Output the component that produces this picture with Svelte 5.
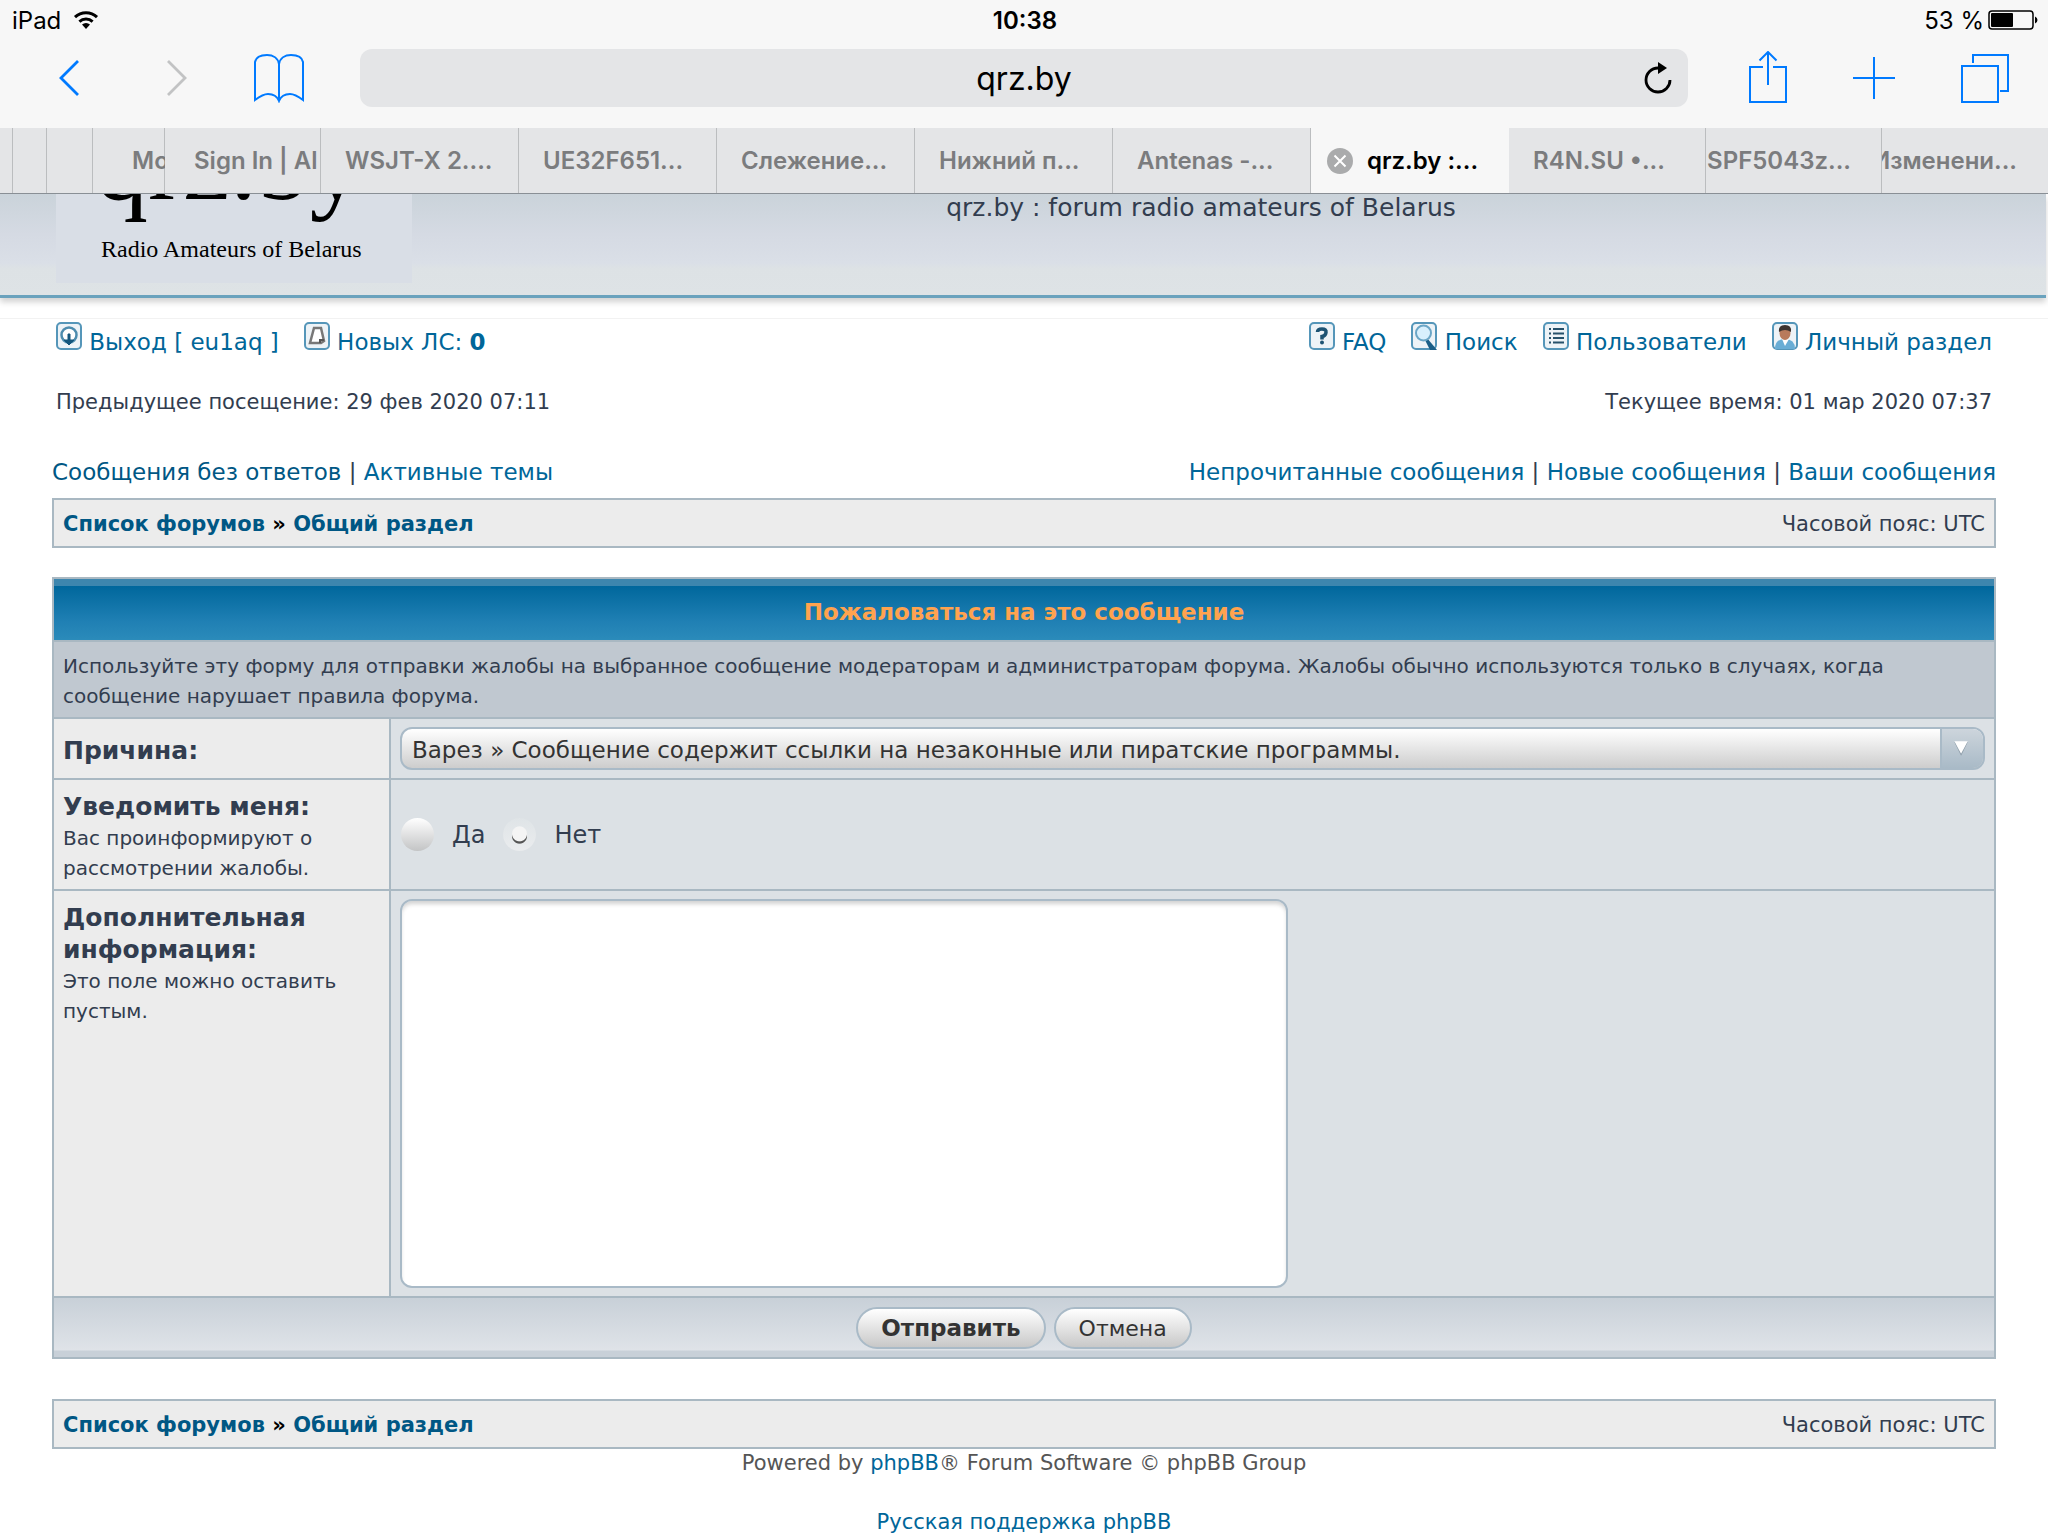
<script>
	let reason = $state('warez');
	let notify = $state('no');
	let details = $state('');

	const tabs = [
		{ title: '', width: 13 },
		{ title: '', width: 34 },
		{ title: '', width: 46 },
		{ title: 'Mo', width: 72, stack: 'deep' },
		{ title: 'Sign In | Al', width: 156, stack: 'left' },
		{ title: 'WSJT-X 2....', width: 198 },
		{ title: 'UE32F651...', width: 198 },
		{ title: 'Слежение...', width: 198 },
		{ title: 'Нижний п...', width: 198 },
		{ title: 'Antenas -...', width: 198 },
		{ title: 'qrz.by :...', width: 198, active: true },
		{ title: 'R4N.SU •...', width: 197 },
		{ title: 'SPF5043z...', width: 176, stack: 'right' },
		{ title: 'Изменени...', width: 166, stack: 'right' }
	];
</script>

{#snippet crumbs()}
	<nav class="crumbs">
		<p class="crumbs__path">
			<a href="#index">Список форумов</a> » <a href="#forum">Общий раздел</a>
		</p>
		<p class="crumbs__zone">Часовой пояс: UTC</p>
	</nav>
{/snippet}

<div class="browser">
	<div class="status">
		<div class="status__side">
			<span>iPad</span>
			<svg width="26" height="20" viewBox="0 0 26 20">
				<path d="M2 7.2a16 16 0 0 1 22 0M6.4 11.6a10 10 0 0 1 13.2 0" fill="none" stroke="#000" stroke-width="3" />
				<path d="M13 19l-4-4.400a6 6 0 0 1 8 0z" />
			</svg>
		</div>
		<span class="status__time">10:38</span>
		<div class="status__side status__side_right">
			<span>53 %</span>
			<svg width="50" height="20" viewBox="0 0 50 20">
				<rect x="1" y="1" width="44" height="18" rx="3" fill="none" stroke="#000" stroke-width="1.500" />
				<rect x="3" y="3" width="22" height="14" rx="1" />
				<path d="M47 6.500q2.500 1 2.500 3.500t-2.500 3.500z" />
			</svg>
		</div>
	</div>

	<div class="toolbar">
		<div class="toolbar__group">
			<div class="toolbar__nav">
				<button type="button" class="tool" aria-label="Back">
					<svg width="24" height="40" viewBox="0 0 24 40"><path d="M21 3L4 20l17 17" stroke-width="2.800" /></svg>
				</button>
				<button type="button" class="tool tool_off" aria-label="Forward" disabled>
					<svg width="24" height="40" viewBox="0 0 24 40"><path d="M3 3l17 17L3 37" stroke-width="2.800" /></svg>
				</button>
			</div>
			<button type="button" class="tool" aria-label="Bookmarks">
				<svg width="52" height="50" viewBox="0 0 52 50">
					<path
						d="M26 48V11C25 5 20 2 14 2S3 4 2 9v38c4-3 8-6 13-6 6 0 9 2 11 7 2-5 5-7 11-7 5 0 9 3 13 6V9C49 4 44 2 38 2S27 5 26 11"
					/>
				</svg>
			</button>
		</div>
		<div class="address">
			<input class="address__input" type="text" aria-label="Address" value="qrz.by" />
			<button type="button" class="address__reload" aria-label="Reload">
				<svg width="28" height="32" viewBox="0 0 28 32">
					<path d="M14 6A12 12 0 1 0 26 18" fill="none" stroke="#000" stroke-width="2.800" />
					<path d="M14 0v12l9-6z" />
				</svg>
			</button>
		</div>
		<div class="toolbar__group">
			<button type="button" class="tool" aria-label="Share">
				<svg width="40" height="54" viewBox="0 0 40 54">
					<path d="M15 16H2v35h36V16H25M20 34V1M11.500 9.500L20 1l8.500 8.500" />
				</svg>
			</button>
			<button type="button" class="tool" aria-label="New tab">
				<svg width="44" height="44" viewBox="0 0 44 44"><path d="M22 1v42M1 22h42" /></svg>
			</button>
			<button type="button" class="tool" aria-label="Tabs">
				<svg width="50" height="50" viewBox="0 0 50 50">
					<path d="M2 13h36v36H2zM13 10V2h35v36h-8" />
				</svg>
			</button>
		</div>
	</div>

	<div class="tabs">
		{#each tabs as tab}
			<button
				type="button"
				class="tab {tab.stack ? 'tab_' + tab.stack : ''}"
				class:tab_active={tab.active}
				style:flex-grow={tab.width}
				aria-label={tab.title || 'Tab'}
			>
				{#if tab.active}
					<svg class="tab__close" width="26" height="26" viewBox="0 0 26 26">
						<circle cx="13" cy="13" r="13" fill="#aaabac" />
						<path d="M7.500 7.500l11 11M18.500 7.500l-11 11" stroke="#fff" stroke-width="2" />
					</svg>
				{/if}
				<span>{tab.title}</span>
			</button>
		{/each}
	</div>
</div>

<div class="page">
	<header class="header">
		<a class="logo" href="#index">
			<span class="logo__name">qrz.by</span>
			<span class="logo__text">Radio Amateurs of Belarus</span>
		</a>
		<p class="header__title">qrz.by : forum radio amateurs of Belarus</p>
	</header>

	<div class="menu">
		<div class="menu__group">
			<a class="menu__link" href="#logout">
				<svg class="icon" viewBox="0 0 26 28">
					<rect class="icon__frame" x="1" y="1" width="24" height="26" rx="4" />
					<circle cx="13" cy="13" r="7.500" fill="#fff" stroke="#4d8cae" stroke-width="2.500" />
					<path d="M12 12h2v6h4l-5 5-5-5h4z" fill="#14567c" stroke="#14567c" />
				</svg>
				Выход [ eu1aq ]
			</a>
			<a class="menu__link" href="#messages">
				<svg class="icon" viewBox="0 0 26 28">
					<rect class="icon__frame" x="1" y="1" width="24" height="26" rx="4" />
					<path d="M10 6h7l3 13-3 2H6z" fill="#fff" stroke="#777" stroke-width="2.500" />
					<path d="M16 21v-3h4" fill="none" stroke="#555" stroke-width="2" />
				</svg>
				Новых ЛС: <strong>0</strong>
			</a>
		</div>
		<div class="menu__group">
			<a class="menu__link" href="#faq">
				<svg class="icon" viewBox="0 0 26 28">
					<rect class="icon__frame" x="1" y="1" width="24" height="26" rx="4" />
					<path d="M8.500 10q0-3 4.500-3t4 3.500-4 4v3" fill="none" stroke="#1d5373" stroke-width="3.500" />
					<circle cx="13" cy="20.500" r="2" fill="#1d5373" />
				</svg>
				FAQ
			</a>
			<a class="menu__link" href="#search">
				<svg class="icon" viewBox="0 0 26 28">
					<rect class="icon__frame" x="1" y="1" width="24" height="26" rx="4" />
					<path d="M16 16l10 12h-7l-5-10z" fill="#1b5f88" />
					<circle cx="12.500" cy="11" r="7.500" fill="#d8f0fd" stroke="#6ba6c6" stroke-width="2" />
				</svg>
				Поиск
			</a>
			<a class="menu__link" href="#members">
				<svg class="icon" viewBox="0 0 26 28">
					<rect class="icon__frame" x="1" y="1" width="24" height="26" rx="4" />
					<path
						d="M6 7h2M6 11.500h2M6 16h2M6 20.500h2M10 7h11M10 11.500h11M10 16h11M10 20.500h11"
						stroke="#26516b"
						stroke-width="2"
					/>
				</svg>
				Пользователи
			</a>
			<a class="menu__link" href="#profile">
				<svg class="icon" viewBox="0 0 26 28">
					<rect class="icon__frame" x="1" y="1" width="24" height="26" rx="4" />
					<path d="M3 27q0-10 10-10t10 10z" fill="#69add5" />
					<path d="M10 17l3 7 4-7z" fill="#fff" />
					<ellipse cx="13" cy="11" rx="5.500" ry="7" fill="#b87a5c" />
					<path d="M7 10q-1-7 6-7t6 7q-6-4-12 0z" fill="#3d332f" />
				</svg>
				Личный раздел
			</a>
		</div>
	</div>

	<div class="visits">
		<p>Предыдущее посещение: 29 фев 2020 07:11</p>
		<p>Текущее время: 01 мар 2020 07:37</p>
	</div>

	<main class="content">
		<div class="searches">
			<p><a class="visited" href="#unanswered">Сообщения без ответов</a> | <a href="#active">Активные темы</a></p>
			<p>
				<a href="#unread">Непрочитанные сообщения</a> | <a href="#new">Новые сообщения</a> |
				<a href="#own">Ваши сообщения</a>
			</p>
		</div>

		{@render crumbs()}

		<form class="report" onsubmit={(e) => e.preventDefault()}>
			<h1 class="report__title">Пожаловаться на это сообщение</h1>
			<p class="report__info">
				Используйте эту форму для отправки жалобы на выбранное сообщение модераторам и администраторам форума. Жалобы
				обычно используются только в случаях, когда сообщение нарушает правила форума.
			</p>

			<div class="row">
				<div class="row__name row__name_middle"><label class="row__label" for="reason">Причина:</label></div>
				<div class="row__value">
					<div class="select">
						<select class="select__field" id="reason" bind:value={reason}>
							<option value="warez">Варез » Сообщение содержит ссылки на незаконные или пиратские программы.</option>
						</select>
						<svg class="select__arrow" width="43" height="39" viewBox="0 0 43 39">
							<path d="M13 13h14l-7 14z" fill="#8c9ca8" />
							<path d="M13 12h14l-7 13z" fill="#fff" />
						</svg>
					</div>
				</div>
			</div>

			<div class="row">
				<div class="row__name">
					<span class="row__label" id="notify">Уведомить меня:</span>
					<span class="row__hint">Вас проинформируют о рассмотрении жалобы.</span>
				</div>
				<div class="row__value row__value_radios" role="radiogroup" aria-labelledby="notify">
					<label class="radio"><input class="radio__input" type="radio" value="yes" bind:group={notify} />Да</label>
					<label class="radio"><input class="radio__input" type="radio" value="no" bind:group={notify} />Нет</label>
				</div>
			</div>

			<div class="row">
				<div class="row__name">
					<label class="row__label" for="details">Дополнительная информация:</label>
					<span class="row__hint">Это поле можно оставить пустым.</span>
				</div>
				<div class="row__value">
					<textarea class="details" id="details" bind:value={details}></textarea>
				</div>
			</div>

			<div class="report__actions">
				<button type="submit" class="btn btn_main">Отправить</button>
				<button type="button" class="btn">Отмена</button>
			</div>
		</form>

		{@render crumbs()}
	</main>

	<footer class="footer">
		<p>Powered by <a href="#phpbb">phpBB</a>® Forum Software © phpBB Group</p>
		<p><a href="#support">Русская поддержка phpBB</a></p>
	</footer>
</div>

<style>
	:global(body) {
		background: #fff;
	}
	* {
		box-sizing: border-box;
	}
	p,
	h1 {
		margin: 0;
	}
	button,
	input,
	select,
	textarea {
		margin: 0;
		padding: 0;
		border: none;
		background: none;
		font-family: inherit;
	}
	svg {
		display: block;
		flex-shrink: 0;
	}

	.browser {
		background: #f7f7f7;
		border-bottom: 1px solid #8b9197;
		font-family: Inter, 'Liberation Sans', sans-serif;
		color: #000;
	}
	.status {
		display: grid;
		grid-template-columns: 1fr auto 1fr;
		align-items: center;
		height: 40px;
		padding: 0 10px 0 12px;
		font-size: 24px;
	}
	.status__side {
		display: flex;
		align-items: center;
		gap: 12px;
	}
	.status__side_right {
		justify-content: flex-end;
		gap: 4px;
	}
	.status__time {
		font-weight: 600;
	}

	.toolbar {
		display: flex;
		align-items: center;
		gap: 55px;
		height: 88px;
		padding: 0 38px 12px 57px;
	}
	.toolbar__group {
		display: flex;
		align-items: center;
		gap: 64px;
	}
	.toolbar__group:last-child {
		padding-left: 5px;
	}
	.toolbar__nav {
		display: flex;
		gap: 84px;
	}
	.tool svg {
		fill: none;
		stroke: #007aff;
		stroke-width: 2;
	}
	.tool_off svg {
		stroke: #c2c3c4;
	}
	.address {
		display: flex;
		align-items: center;
		flex-grow: 1;
		height: 58px;
		padding: 0 16px 0 44px;
		border-radius: 12px;
		background: #e4e5e7;
	}
	.address__input {
		flex-grow: 1;
		font-size: 32px;
		text-align: center;
	}

	.tabs {
		display: flex;
		height: 65px;
	}
	.tab {
		display: flex;
		align-items: center;
		flex-basis: 0;
		min-width: 0;
		overflow: hidden;
		box-shadow: inset -1px 0 #bbbdbf;
		background: #e4e5e7;
		font-size: 24px;
		font-weight: 600;
		color: #7b7c7e;
		white-space: nowrap;
	}
	.tab span {
		flex-shrink: 0;
		margin-left: 24px;
	}
	.tab:last-child {
		box-shadow: none;
	}
	.tab_deep span {
		margin-left: 39px;
	}
	.tab_left span {
		margin-left: 29px;
	}
	.tab_right {
		justify-content: flex-end;
	}
	.tab_right span {
		margin: 0 31px 0 0;
	}
	.tab_active {
		box-shadow: none;
		background: #f7f7f7;
		color: #000;
	}
	.tab_active span {
		margin-left: 14px;
	}
	.tab__close {
		margin-left: 16px;
	}

	.page {
		font-family: 'DejaVu Sans', sans-serif;
		color: #323d4f;
	}
	a {
		color: #006699;
		text-decoration: none;
	}
	a.visited {
		color: #005784;
	}
	.header {
		display: flex;
		height: 104px;
		margin-right: 2px;
		padding: 0 56px;
		border-bottom: 3px solid #6aa2bd;
		background: linear-gradient(#cad3da, #d5dae3 40%, #dadfe7 68%, #dde2e5 74%, #dee3e6);
		box-shadow: 0 4px 6px rgba(0, 0, 0, 0.18);
	}
	.logo {
		display: flex;
		flex-direction: column;
		justify-content: flex-end;
		flex-shrink: 0;
		width: 356px;
		height: 89px;
		padding: 0 0 19px 39px;
		overflow: hidden;
		background: #d9dee6;
		font-family: 'Liberation Serif', serif;
		color: #000;
		white-space: nowrap;
	}
	.logo__name {
		margin-bottom: 20px;
		font-size: 106px;
		line-height: 100px;
	}
	.logo__text {
		padding-left: 6px;
		font-size: 24px;
		line-height: 30px;
	}
	.header__title {
		flex-grow: 1;
		font-size: 25px;
		line-height: 27px;
		text-align: center;
	}

	.menu,
	.visits,
	.searches,
	.crumbs {
		display: flex;
		justify-content: space-between;
	}
	.menu {
		margin-top: 20px;
		padding: 3px 56px 0;
		border-top: 1px solid #f2f2f2;
		font-size: 23px;
		line-height: 34px;
	}
	.menu__group {
		display: flex;
		gap: 25px;
	}
	.menu__link {
		display: block;
	}
	.icon {
		display: inline-block;
		width: 26px;
		height: 28px;
	}
	.icon__frame {
		fill: #edf3f7;
		stroke: #5596b9;
		stroke-width: 2;
	}
	.visits {
		padding: 28px 56px 0;
		font-size: 21px;
		line-height: 30px;
	}
	.content {
		padding: 38px 52px 0;
	}
	.searches {
		margin-bottom: 9px;
		font-size: 23px;
		line-height: 34px;
	}
	.crumbs {
		align-items: center;
		height: 50px;
		padding: 2px 9px 0;
		border: 2px solid #a9b8c2;
		background: #ececec;
		font-size: 21px;
	}
	.crumbs__path {
		font-weight: 700;
		color: #000;
	}
	.crumbs__path a {
		color: #005784;
	}

	.report {
		display: flex;
		flex-direction: column;
		gap: 2px;
		margin: 29px 0 40px;
		border: 2px solid #a9b8c2;
		background: #a9b8c2;
	}
	.report__title {
		height: 61px;
		padding-top: 6px;
		background: linear-gradient(#3d86ae 0 7px, #00679c 7px, #2080b4 70%, #2b8bba);
		font-size: 23px;
		line-height: 54px;
		color: #ffa34f;
		text-align: center;
	}
	.report__info {
		padding: 9px 9px 6px;
		background: #c0c8d0;
		font-size: 20px;
		line-height: 30px;
	}
	.row {
		display: grid;
		grid-template-columns: 335px 1fr;
		gap: 2px;
	}
	.row__name {
		padding: 11px 9px 6px;
		background: #ececec;
	}
	.row__label {
		display: block;
		font-size: 25px;
		font-weight: 700;
		line-height: 32px;
	}
	.row__hint {
		display: block;
		font-size: 20px;
		line-height: 30px;
	}
	.row__value {
		padding: 8px 9px;
		background: #dce1e5;
	}
	.row__name_middle {
		display: flex;
		align-items: center;
	}
	.row__value_radios {
		display: flex;
		align-items: center;
		gap: 18px;
		padding-left: 10px;
	}
	.select {
		display: grid;
		height: 43px;
		border: 2px solid #a9bac7;
		border-radius: 12px;
		background: linear-gradient(#fff, #cdcdcd);
		overflow: hidden;
	}
	.select__field,
	.select__arrow {
		grid-area: 1 / 1;
	}
	.select__field {
		width: 100%;
		padding: 2px 50px 0 10px;
		appearance: none;
		font-size: 23px;
		color: #333;
	}
	.select__arrow {
		justify-self: end;
		border-left: 2px solid #a9bac7;
		background: linear-gradient(#cdd5dc, #a9bac7);
		pointer-events: none;
	}
	.radio {
		display: flex;
		align-items: center;
		gap: 18px;
		font-size: 24px;
	}
	.radio__input {
		width: 33px;
		height: 33px;
		appearance: none;
		border-radius: 50%;
		background: linear-gradient(#fff, #c3c4c5);
	}
	.radio__input:checked {
		background: radial-gradient(circle at 50% 48%, #f4f4f4 0 7px, transparent 8px),
			radial-gradient(circle at 50% 55%, #555 0 7px, transparent 8px), linear-gradient(#dfe4e7, #eaecee);
	}
	.details {
		display: block;
		width: 56%;
		height: 389px;
		padding: 8px;
		border: 2px solid #a9bac7;
		border-radius: 12px;
		background: #fff;
		box-shadow: inset 0 4px 4px -1px rgba(0, 0, 0, 0.18);
		font-size: 23px;
		resize: none;
	}
	.report__actions {
		display: flex;
		justify-content: center;
		gap: 8px;
		height: 59px;
		padding-top: 9px;
		background: linear-gradient(#c8d0d8, #dfe3e8 52px, #c8d0d8 53px);
	}
	.btn {
		height: 42px;
		padding: 0 23px;
		border: 2px solid #a9bac7;
		border-radius: 21px;
		background: linear-gradient(#fff, #c8c8c8);
		font-size: 22px;
		color: #333;
	}
	.btn_main {
		font-size: 23px;
		font-weight: 700;
	}

	.footer {
		display: flex;
		flex-direction: column;
		align-items: center;
		gap: 30px;
		font-size: 21px;
		line-height: 29px;
		color: #555;
	}
</style>
